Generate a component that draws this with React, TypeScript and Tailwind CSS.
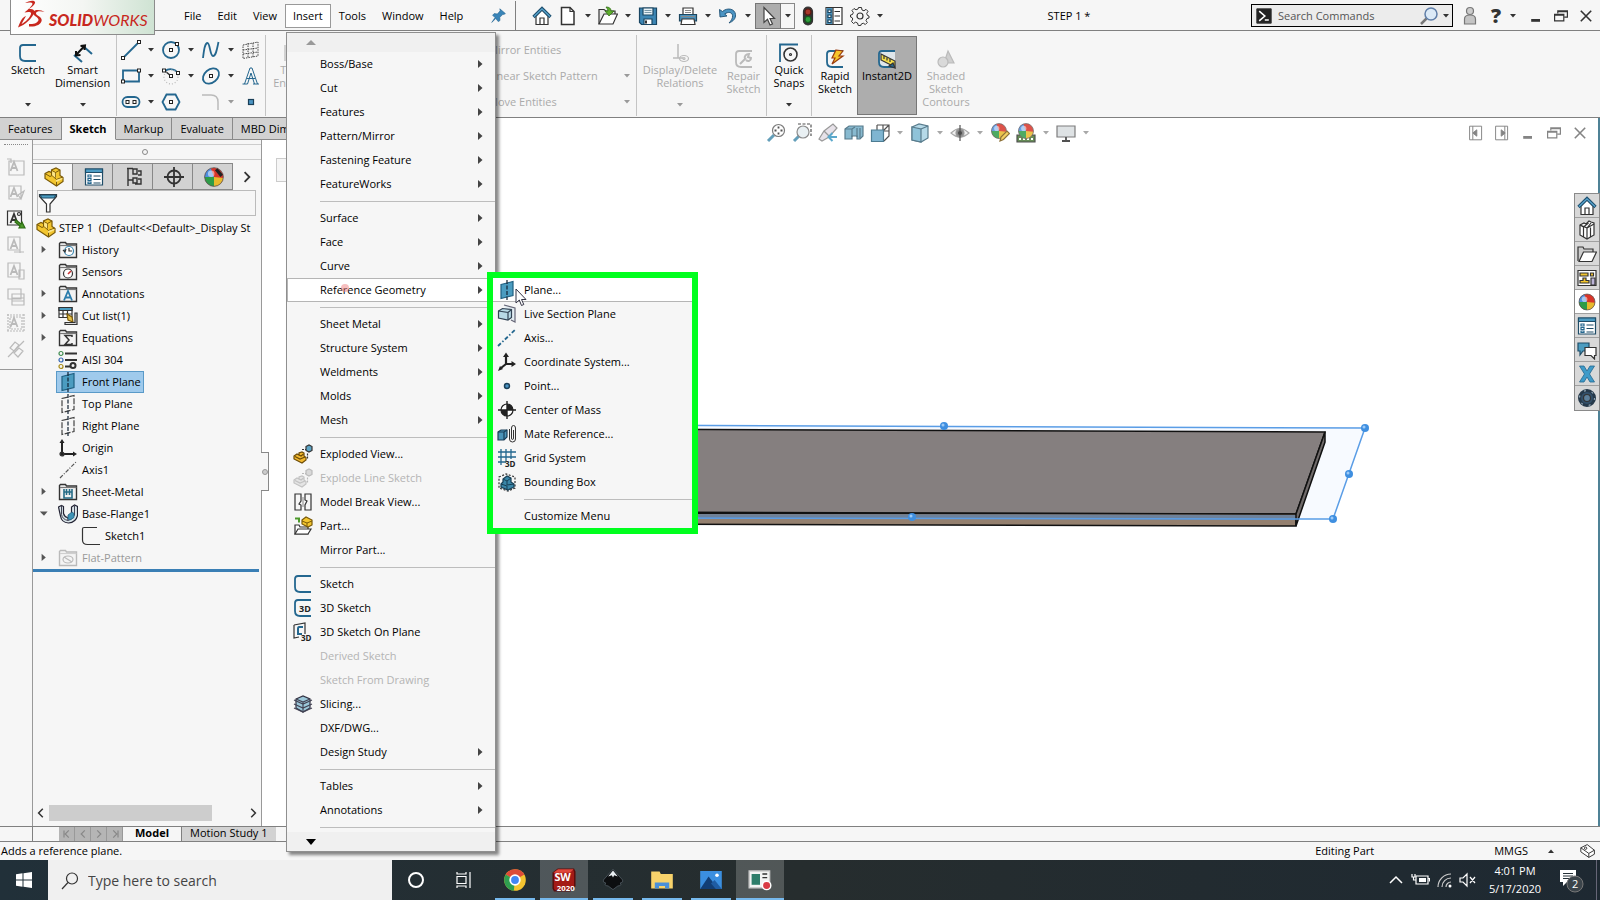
import { useState, type ReactNode } from "react";
import clsx from "clsx";

type IconProps = { children: ReactNode; size?: string; dim?: boolean };

// All icons are drawn on a 20x20 grid
function Icon({ children, size = "size-5", dim }: IconProps) {
  return (
    <svg viewBox="0 0 20 20" className={clsx(size, "shrink-0", dim && "opacity-30 grayscale")} fill="none" stroke="#333" strokeWidth={1.2} aria-hidden="true">
      {children}
    </svg>
  );
}

function Caret({ dim, up }: { dim?: boolean; up?: boolean }) {
  return (
    <svg viewBox="0 0 6 4" className={clsx("h-1 w-1.5 shrink-0", up && "rotate-180")} aria-hidden="true">
      <path d="M0 0h6L3 3.6z" fill={dim ? "#9a9a9a" : "#333"} />
    </svg>
  );
}

const Ball = ({ x = 10, y = 10, r = 7.5 }: { x?: number; y?: number; r?: number }) => (
  <g stroke="none">
    <circle cx={x} cy={y} r={r} fill="#d8352a" />
    <path d={`M${x} ${y}L${x - r * 0.35} ${y - r * 0.94}A${r} ${r} 0 0 0 ${x - r} ${y + r * 0.1}z`} fill="#4f8fe0" />
    <path d={`M${x} ${y}L${x - r} ${y}A${r} ${r} 0 0 0 ${x} ${y + r}z`} fill="#2e9c48" />
    <path d={`M${x} ${y}V${y + r}A${r} ${r} 0 0 0 ${x + r} ${y + r * 0.1}z`} fill="#e8b92c" />
    <circle cx={x - r * 0.3} cy={y - r * 0.35} r={r * 0.35} fill="#fff" opacity={0.5} />
    <circle cx={x} cy={y} r={r} stroke="#555" strokeWidth={0.7} fill="none" />
  </g>
);

const Folder = ({ children, dim }: { children?: ReactNode; dim?: boolean }) => (
  <Icon dim={dim}>
    <path d="M1.500 17.500v-14l1-1h5l1 1.500h10v13.500z" fill="#f2f2f2" strokeWidth={1.4} />
    <path d="M2 5.500h16.500" stroke="#777" />
    {children}
  </Icon>
);

const PartBody = ({ dim }: { dim?: boolean }) => (
  <Icon dim={dim}>
    <path d="M1 6.500l4-2 2.500 1V3L12 1l4 2v5.500l3 2v4L12.500 19 1 11.500z" fill="#f3c62f" stroke="#7a5a08" />
    <path d="M1 6.500l5 3 2-1 4.500 4V19M12.500 12.500L19 10M7.500 5.500v3M8 3.500l3.500 2L16 3M11.500 5.500v5" stroke="#7a5a08" strokeWidth={1} />
    <path d="M8.200 4.200l3 1.700v4.500l-3-2.200zM12 13l6.500-2.300-.2 1.500L12 15z" fill="#fbe58c" stroke="none" />
  </Icon>
);

const SketchMark = () => <path d="M18 2H5Q2 2 2 5v8q0 5 5 5h11" stroke="#24678f" strokeWidth={1.8} />;

const Plane = ({ fill = "none", stroke = "#444" }: { fill?: string; stroke?: string }) => (
  <Icon>
    <path d="M4 4.500l12-3v14l-12 3z" fill={fill} stroke={stroke} strokeDasharray={fill === "none" ? "6 1.500" : undefined} />
    <path d="M10 0v20" stroke="#123" strokeDasharray="4 1.500" />
  </Icon>
);

const House = () => (
  <Icon>
    <path d="M4 10v8.500h12V10L10 4z" fill="#fff" />
    <path d="M8 18v-6h4v6" />
    <path d="M1.500 11L10 2.500l8.500 8.500" stroke="#1d4f70" strokeWidth={3.2} />
    <path d="M2 10.500L10 2.800l8 7.700" stroke="#5aa7cf" strokeWidth={1.2} />
  </Icon>
);

const Sheet = () => (
  <Icon>
    <path d="M1.500 2h17v16h-17z" fill="#fff" stroke="#1f4d68" />
    <path d="M1.500 2h17v3.500h-17z" fill="#4c9cc4" stroke="#1f4d68" />
    <path d="M4 8h3v2H4zM4 11.500h3v2H4zM4 15h3v1.500H4z" stroke="#24678f" />
    <path d="M9.500 9h7M9.500 12.500h7M9.500 16h7" stroke="#1f4d68" />
  </Icon>
);

const Restore = () => (
  <Icon>
    <path d="M6 7V3.500h12v8h-4M6.500 4.500H18" strokeWidth={1.5} />
    <path d="M2 8h11.500v8H2zM2 9h11" strokeWidth={1.5} />
  </Icon>
);
const Close = () => <Icon><path d="M3.500 3.500l13 13M16.500 3.500l-13 13" strokeWidth={2} /></Icon>;
const Minimize = () => <Icon><path d="M4 15.500h11" strokeWidth={3.5} /></Icon>;

const Axis = () => <Icon><path d="M1 18L19 1" stroke="#24678f" strokeDasharray="4 2 1.500 2" strokeWidth={1.8} /></Icon>;

const Exploded = ({ dim }: { dim?: boolean }) => (
  <Icon dim={dim}>
    <path d="M1 12l3-2 2 1V9l3-1 2 1v3l2 1.500V16l-4 3-8-4z" fill="#f3b92f" stroke="#6d4c06" />
    <path d="M2 12.500l5 2.500 5-2M6 11l2 1 2.500-2" stroke="#6d4c06" />
    <path d="M13 2.500l3-1.500 3 1.500v4L16 8l-3-1.500z" fill="#5ea5c6" />
    <path d="M9 5.500h4M14.500 14.500v-6" strokeDasharray="2 1" />
  </Icon>
);

/* ---------- title bar ---------- */

const quickTools: { name: string; caret?: boolean; icon: ReactNode }[] = [
  { name: "Home", icon: <House /> },
  { name: "New", caret: true, icon: <Icon><path d="M3.500 1.500h8.500l4 4v13H3.500z" fill="#fff" strokeWidth={1.5} /><path d="M12 1.500v4h4" /></Icon> },
  {
    name: "Open",
    caret: true,
    icon: (
      <Icon>
        <path d="M1 18V3.500h5L8 5h9v3" fill="#e8e8e8" />
        <path d="M1 18L6 8h13.500L15 18z" fill="#fff" />
        <path d="M8 1c3 0 5 1 5 4h3l-5 5-4-5h3c0-1-.5-2-2-4z" fill="#5fae2e" stroke="#34701a" strokeWidth={0.8} />
      </Icon>
    ),
  },
  {
    name: "Save",
    caret: true,
    icon: (
      <Icon>
        <path d="M1.500 2h17v16.500h-15l-2-2z" fill="#3d86b4" stroke="#1a4663" />
        <path d="M5 2h10v7H5z" fill="#e9f2f7" stroke="#1a4663" />
        <path d="M6.500 4.500h7M6.500 6.500h7" stroke="#7a98a8" />
        <path d="M6 13h8v5.500H6z" fill="#fff" stroke="#1a4663" />
        <path d="M8 14.500v3" strokeWidth={2} />
      </Icon>
    ),
  },
  {
    name: "Print",
    caret: true,
    icon: (
      <Icon>
        <path d="M5 9V2h10v7" fill="#fff" />
        <path d="M1.500 8.500h17V15h-17z" fill="#4c93bd" stroke="#1d465f" />
        <path d="M4 13h12l1 5.500H3z" fill="#fff" />
        <path d="M7 4.500h6M7 6.500h6M3 10.500h14" stroke="#888" />
      </Icon>
    ),
  },
  {
    name: "Undo",
    caret: true,
    icon: <Icon><path d="M1.500 3.500l.5 7.500 7-1-2.300-2C10 5.500 14 6 14.500 9.500c.3 2.500-1 5-3.500 7.500 4-1.500 7-4.500 6.500-8.500C17 3 9.500 1 4.500 5.500z" fill="#4b94c3" stroke="#1d4f73" strokeWidth={0.9} /></Icon>,
  },
];

function QuickAccess() {
  return (
    <div className="ml-[13px] flex items-center">
      {quickTools.map((t) => (
        <div key={t.name} className="flex items-center">
          <button aria-label={t.name} className="flex w-[26px] justify-center">{t.icon}</button>
          {t.caret && <button aria-label={`${t.name} options`} className="flex h-5 w-3.5 items-center justify-center"><Caret /></button>}
        </div>
      ))}
      <button aria-label="Select" className="flex h-[26px] w-[26px] items-center justify-center border border-[#777] bg-[#adadad]">
        <Icon><path d="M6 1.500v15l3.500-3.200L12 19l2.500-1-2.500-5.500h4.500z" fill="#fff" stroke="#444" /></Icon>
      </button>
      <button aria-label="Select options" className="flex h-[26px] w-3.5 items-center justify-center border border-l-0 border-[#888]"><Caret /></button>
      <button aria-label="Rebuild" className="flex w-[26px] justify-center">
        <Icon>
          <rect x="5.500" y="1" width="9" height="18" rx="4.500" fill="#333" />
          <circle cx="10" cy="6" r="3" fill="#a8382c" stroke="#5e1b12" />
          <circle cx="10" cy="13.500" r="3" fill="#2f9e3c" stroke="#155a1e" />
        </Icon>
      </button>
      <button aria-label="File properties" className="flex w-[26px] justify-center">
        <Icon>
          <path d="M2 1.500h16v17H2z" fill="#fff" />
          <path d="M2.500 2h6v16h-6z" fill="#4c93bd" stroke="none" />
          <path d="M4 4h3v2.500H4zM4 9h3v2.500H4zM4 14h3v2.500H4z" fill="#fff" stroke="#1d465f" />
          <path d="M10.500 5.500h5.500M10.500 10h5.500M10.500 15h5.500M9 2v16" />
        </Icon>
      </button>
      <button aria-label="Options" className="flex w-[26px] justify-center">
        <Icon>
          <path d="M8.500 1.500h3l.5 2.500 2 .8 2-1.500 2 2-1.300 2.200.8 2 1.500.5v2l-2 .5-1 2 1.300 2-2 2-2-1.300-2 .8-.5 1.500h-2.500L7.500 17l-2-.8-2 1.300-2-2L2.800 13 2 11.500.5 11V9l2-.5.8-2L2 4.500l2-2 2 1.300 2-.8z" strokeWidth={1} />
          <circle cx="10" cy="10" r="3" />
        </Icon>
      </button>
      <button aria-label="Options list" className="flex h-5 w-3.5 items-center justify-center"><Caret /></button>
    </div>
  );
}

function Logo() {
  return (
    <div className="absolute left-[10px] top-0 flex h-[35px] w-[145px] items-start gap-1 border border-t-0 border-[#8c8c8c] bg-linear-to-r from-white via-[#f4f6f3] to-[#cfe3d3] pl-1.5 text-[#c8281e]">
      <svg viewBox="0 0 28 28" className="size-7 shrink-0" fill="#c8281e" aria-hidden="true">
        <path d="M8 3C11 1 17-.5 18 2c.6 2-3 5-6 7 4-.6 6 1 5 4-1.600 5-9 12-16 14.500 1-3 2.500-6.500 4-8.500 1-1.300 2.500-2.300 4-3l-4.500 8c4-2 8.500-6.500 9.500-10 .5-2.500-3-2.300-6.500-1.500C11 9.500 15 6 15.500 4 15.500 2 11 2.500 8 3z" />
        <path d="M27.500 12c-3-2.500-10-3-11.500 0-1.500 3.500 6 5 5.500 8-.4 2.500-4.500 4.500-9.500 4v2.500c7 .5 12-2 12.700-6 .6-4-6.200-5-5.700-7.500.5-2 5-2 8.500-1z" />
      </svg>
      <span className="whitespace-nowrap pt-3 font-[Lato] text-base leading-4 italic">
        <b className="font-black">SOLID</b>WORKS
      </span>
    </div>
  );
}

function TitleBar() {
  return (
    <header className="relative flex h-[31px] shrink-0 items-center border-b border-[#808080] bg-[#f6f6f6] pt-px">
      <Logo />
      <nav className="ml-44 flex h-full w-[340px] shrink-0 items-center border-r border-[#808080]">
        {["File", "Edit", "View", "Insert", "Tools", "Window", "Help"].map((m) => (
          <button key={m} className={clsx("h-6 border px-[7px]", m === "Insert" ? "border-[#999] bg-white" : "border-transparent")}>{m}</button>
        ))}
        <button aria-label="Pin menu" className="mr-2 ml-auto">
          <Icon size="size-4"><path d="M11 1l7 6-2 1-1-.3-4 4 .2 4L9 17l-3-4-5 5 4-6-3-3 2-2 4 .5 3.500-4z" fill="#3a85b8" stroke="#2a6a96" strokeWidth={0.8} /></Icon>
        </button>
      </nav>
      <QuickAccess />
      <h1 className="flex-1 text-center">STEP 1 *</h1>
      <form className="flex h-[23px] w-[202px] items-center border border-black bg-[#ececec] pl-1">
        <Icon size="size-4"><path d="M1 1h18v18H1z" fill="#222" /><path d="M4 4l7 6-7 6M11 15h5" stroke="#fff" strokeWidth={2} /></Icon>
        <input aria-label="Search Commands" placeholder="Search Commands" className="ml-1.5 w-0 flex-1 outline-none placeholder:text-[#555]" />
        <button aria-label="Search" type="button" className="ml-1">
          <Icon><path d="M7.500 12.500L2 18" stroke="#777" strokeWidth={2.5} /><circle cx="12" cy="8" r="6" fill="#dceaf7" stroke="#5f7ea8" strokeWidth={1.5} /></Icon>
        </button>
        <button aria-label="Search scope" type="button" className="pr-[3px] pl-1"><Caret /></button>
      </form>
      <button aria-label="Log in" className="ml-[7px]">
        <Icon><circle cx="10" cy="5" r="3.500" fill="#ccc" stroke="#777" /><path d="M4.500 18v-5q0-4 5.500-4t5.500 4v5z" fill="#c4c4c4" stroke="#777" /></Icon>
      </button>
      <button aria-label="Help topics" className="ml-2 w-4 text-xl leading-5 font-extrabold text-[#333]">?</button>
      <button aria-label="Help list" className="ml-1.5"><Caret /></button>
      <div className="mr-1.5 ml-3 flex items-center gap-[9px] [&_svg]:size-4">
        <button aria-label="Minimize"><Minimize /></button>
        <button aria-label="Restore"><Restore /></button>
        <button aria-label="Close"><Close /></button>
      </div>
    </header>
  );
}

/* ---------- ribbon ---------- */

const node = (x: number, y: number) => <rect x={x - 1.5} y={y - 1.5} width="3" height="3" fill="#fff" stroke="#222" strokeWidth={1} />;

const sketchTools: { name: string; caret?: boolean; dim?: boolean; icon: ReactNode }[] = [
  { name: "Line", caret: true, icon: <Icon><path d="M2 18L18 2" stroke="#24678f" strokeWidth={1.8} />{node(2, 18)}{node(18, 2)}</Icon> },
  { name: "Circle", caret: true, icon: <Icon><circle cx="10" cy="10" r="8" stroke="#24678f" strokeWidth={1.8} />{node(10, 10)}{node(16, 4)}</Icon> },
  { name: "Spline", caret: true, icon: <Icon><path d="M2 18C3 9 4 3 6.500 3S9 16 12 16s4-7 5.500-14" stroke="#24678f" strokeWidth={1.8} /></Icon> },
  { name: "Sketch plane", icon: <Icon><path d="M2 5l15-3v14L2 18.500zM7 3v15M12 3v14M2 10l15-2M2 14l15-2" strokeDasharray="1.500 1" strokeWidth={0.9} /></Icon> },
  { name: "Rectangle", caret: true, icon: <Icon><path d="M2 4.500h16v11H2z" stroke="#24678f" strokeWidth={1.8} />{node(2, 15.5)}{node(18, 4.5)}</Icon> },
  { name: "Arc", caret: true, icon: <Icon><path d="M4 5c5-4 12-1 13 3" stroke="#24678f" strokeWidth={1.8} /><path d="M4 5l6 5" strokeWidth={1.6} /><circle cx="10" cy="11" r="7" strokeDasharray="1 2" stroke="#bbb" />{node(3, 4.5)}{node(10, 10)}{node(17, 7)}</Icon> },
  { name: "Ellipse", caret: true, icon: <Icon><ellipse cx="10" cy="10" rx="9" ry="6.500" transform="rotate(-40 10 10)" stroke="#24678f" strokeWidth={1.8} />{node(10, 10)}</Icon> },
  { name: "Text", icon: <Icon><path d="M1.500 18h5M3.500 18L9 2h2l5.500 16M12 18h6M6 12.500h8M6.500 18L10 7l3.500 11" stroke="#24678f" strokeWidth={1} /></Icon> },
  { name: "Slot", caret: true, icon: <Icon><rect x="1.500" y="5" width="17" height="10" rx="5" stroke="#24678f" strokeWidth={1.8} />{node(6.5, 10)}{node(13.5, 10)}</Icon> },
  { name: "Polygon", icon: <Icon><path d="M5.500 2.500h9l4 7.500-4 7.500h-9L1.500 10z" stroke="#24678f" strokeWidth={1.8} />{node(10, 10)}</Icon> },
  { name: "Fillet", caret: true, dim: true, icon: <Icon dim><path d="M1 3h9q7 0 7 7v8" strokeWidth={1.5} /></Icon> },
  { name: "Point", icon: <Icon><rect x="7.500" y="7.500" width="5" height="5" fill="#4b94c3" stroke="#1a3f58" /></Icon> },
];

type BigButtonProps = { label: string; icon: ReactNode; width: string; dim?: boolean; caret?: boolean; low?: boolean; active?: boolean };

function BigButton({ label, icon, width, dim, caret, low, active }: BigButtonProps) {
  return (
    <button
      disabled={dim}
      className={clsx(
        "flex shrink-0 flex-col items-center leading-[13px] whitespace-pre-line",
        width,
        low ? "pt-3" : "pt-1.5",
        dim && "text-[#aaa]",
        active ? "my-px border border-[#777] bg-[#adadad]" : "my-0.5"
      )}
    >
      {icon}
      <span>{label}</span>
      {caret && <span className="mt-auto pb-[7px]"><Caret dim={dim} /></span>}
    </button>
  );
}

const Rule = () => <div className="mx-px w-px shrink-0 bg-[#c4c4c4]" />;

function Ribbon() {
  return (
    <section className="flex h-[87px] shrink-0 overflow-hidden border-b border-[#808080] bg-[#f6f6f6] pt-1 pb-px">
      <BigButton width="w-14" caret label="Sketch" icon={<Icon><SketchMark /></Icon>} />
      <BigButton
        width="mr-1.5 w-[53px]"
        caret
        label={"Smart\nDimension"}
        icon={<Icon><path d="M1 12l8 7M10 3l9 8" stroke="#24678f" strokeWidth={2} /><path d="M3 12l8.500-9M3 8l0 4.500 4.500-.5M7.500 3l4.500-.5-.5 4.500" strokeWidth={2} stroke="#111" /></Icon>}
      />
      <Rule />
      <div className="mt-0.5 grid shrink-0 grid-cols-[40px_40px_40px_26px] grid-rows-[26px_26px_26px]">
        {sketchTools.map((t) => (
          <div key={t.name} className="flex items-center">
            <button aria-label={t.name} className="flex w-[26px] justify-center">{t.icon}</button>
            {t.caret && <button aria-label={`${t.name} list`} className="flex h-5 w-3.5 items-center justify-center"><Caret dim={t.dim} /></button>}
          </div>
        ))}
      </div>
      <Rule />
      <BigButton width="w-[50px]" dim caret label={"Trim\nEntities"} icon={<Icon dim><path d="M3 2v16M8 4l8 12M16 4L8 16" /></Icon>} />
      <div className="mt-0.5 grid w-[318px] shrink-0 grid-rows-[26px_26px_26px] pl-[171px] text-[#aaa]">
        {["Mirror Entities", "Linear Sketch Pattern", "Move Entities"].map((t, i) => (
          <button key={t} disabled className="flex items-center justify-between pr-[5px] text-left whitespace-nowrap">
            {t}
            {i > 0 && <Caret dim />}
          </button>
        ))}
      </div>
      <Rule />
      <BigButton width="w-[84px]" dim caret label={"Display/Delete\nRelations"} icon={<Icon dim><path d="M8 1v14M3 15h10" strokeWidth={1.5} /><ellipse cx="14" cy="15.500" rx="4.500" ry="3" /><circle cx="14" cy="15.500" r="1" /></Icon>} />
      <BigButton width="w-[43px]" dim low label={"Repair\nSketch"} icon={<Icon dim><path d="M18 2H5Q2 2 2 5v8q0 5 5 5h11" strokeWidth={1.8} /><path d="M6 15l6-6M11 10c-1-3 1-5 4-5l-1 3 3 1c0 3-3 4-5 2" strokeWidth={2} /></Icon>} />
      <Rule />
      <BigButton width="w-[42px]" caret label={"Quick\nSnaps"} icon={<Icon><path d="M1 19V1.500h18" stroke="#24678f" strokeWidth={1.8} /><circle cx="11.500" cy="11.500" r="6.500" strokeWidth={1.6} /><circle cx="11.500" cy="11.500" r="1" /></Icon>} />
      <Rule />
      <BigButton width="w-11" low label={"Rapid\nSketch"} icon={<Icon><SketchMark /><path d="M11 1l7 1-4 5h4L7 15l3-6H7z" fill="#f6c52b" stroke="#9a3c10" /></Icon>} />
      <BigButton width="w-[60px]" low active label="Instant2D" icon={<Icon><path d="M18 2H5Q2 2 2 5v8q0 5 5 5h11" fill="#dfe6ea" stroke="#24678f" strokeWidth={1.8} /><path d="M4 5l14 7v6L4 11z" fill="#f4de4c" /><path d="M7 7v3M10 8.500v3M13 10v3M12 17l6 2-2-5z" fill="#24678f" /></Icon>} />
      <BigButton width="w-[58px]" dim low label={"Shaded\nSketch\nContours"} icon={<Icon dim><path d="M12 2l6 12H8z" fill="#777" /><circle cx="7" cy="13" r="5" fill="#999" /></Icon>} />
    </section>
  );
}

/* ---------- left side ---------- */

const railIcons: ReactNode[] = [
  <path key="a" d="M3 4h15v14H3zM1 2h4v4" />,
  <path key="b" d="M3 3h12v13H3zM12 12l6-4-3 8z" />,
  <path key="c" d="M1.500 2h14v14h-14z" />,
  <path key="d" d="M2 2h12v13H2zM8 17h10M14 10v8" />,
  <path key="e" d="M2 2h12v14H2zM13 9h5v9h-5z" />,
  <path key="f" d="M2 2h13v10H2zM6 7h12v11H6zM6 11h12M6 14h12" />,
  <path key="g" d="M4 4h12v12H4zM2 1v18M18 1v18M1 2h18M1 18h18" strokeDasharray="2 1" />,
  <path key="h" d="M4 9l5-6 4 3-5 6zM8 14l5-5 4 3-5 6zM2 18L18 2" />,
];

function ToolRail() {
  return (
    <aside className="w-8 shrink-0 bg-[#f6f6f6]">
      <div className="mx-1 mt-1 border-t border-dotted border-[#888]" />
      <div className="flex flex-col items-center gap-1.5 border-b border-[#999] pt-3 pb-2.5">
        {railIcons.map((p, i) => (
          <button key={i} aria-label={`Annotation tool ${i + 1}`}>
            <Icon dim={i !== 2}>
              {p}
              {i !== 5 && i !== 7 && <path d="M4.500 14L8 5l3.500 9M6 11h4" strokeWidth={1.8} />}
              {i === 2 && <><circle cx="13" cy="5" r="1.500" /><path d="M10 11l5 4 1-2 3 6h-6l1-2-5-4z" fill="#4c9a2a" stroke="#2d6a14" /></>}
            </Icon>
          </button>
        ))}
      </div>
    </aside>
  );
}

type TreeNode = { name: string; icon: ReactNode; open?: boolean; closed?: boolean; selected?: boolean; child?: boolean; dim?: boolean };

const treeNodes: TreeNode[] = [
  { name: "History", closed: true, icon: <Folder><circle cx="11" cy="11" r="4.500" stroke="#3a87b0" fill="#fff" /><path d="M11 8v3h3M5 10l2 2 1-3" /></Folder> },
  { name: "Sensors", icon: <Folder><circle cx="10" cy="11.500" r="4.500" fill="#fff" /><path d="M10 12l3-3" stroke="#c33" strokeWidth={1.6} /></Folder> },
  { name: "Annotations", closed: true, icon: <Folder><path d="M6 16.500L10 7l4 9.500M7.500 13.500h5" stroke="#2b7cab" strokeWidth={1.8} /></Folder> },
  {
    name: "Cut list(1)",
    closed: true,
    icon: (
      <Icon>
        <path d="M1 1.500h13v10H1z" fill="#fff" />
        <path d="M1 1.500h13v3H1z" fill="#4b9cc0" />
        <path d="M1 8h13M5 4v8M9.500 4v8" />
        <path d="M9 8l5 3 1 5-5-2z" fill="#e5c048" stroke="#7a5a08" />
        <path d="M19 7v11.500H7v-2h10V7z" fill="#ddd" />
      </Icon>
    ),
  },
  { name: "Equations", closed: true, icon: <Folder><path d="M14 9V7.500H7l4 4.500-4 4.500h7V15" strokeWidth={1.5} /></Folder> },
  {
    name: "AISI 304",
    icon: (
      <Icon>
        <circle cx="3" cy="3.500" r="2" stroke="#3e8b4e" /><circle cx="3" cy="10" r="2" stroke="#3667b3" /><circle cx="3" cy="16.500" r="2" stroke="#a98c18" />
        <path d="M7 3.500h12M7 10h12M7 16.500h5" strokeWidth={1.8} /><circle cx="15" cy="15.500" r="2.500" strokeWidth={2} />
      </Icon>
    ),
  },
  { name: "Front Plane", selected: true, icon: <Plane fill="#4b9cc0" stroke="#1f5f80" /> },
  { name: "Top Plane", icon: <Plane /> },
  { name: "Right Plane", icon: <Plane /> },
  { name: "Origin", icon: <Icon><path d="M4 3v13h13" strokeWidth={2} stroke="#222" /><path d="M1.500 5L4 1l2.500 4zM15 13.500l4 2.500-4 2.500z" fill="#222" stroke="none" /><circle cx="4" cy="16" r="2" fill="#222" /></Icon> },
  { name: "Axis1", icon: <Icon><path d="M2 18L18 2" stroke="#555" strokeDasharray="4 1.500 1 1.500" /></Icon> },
  { name: "Sheet-Metal", closed: true, icon: <Folder><path d="M6 7v9h8V7M8.500 7v6M11.500 7v6M6 10h8" stroke="#256b86" strokeWidth={1.6} /></Folder> },
  {
    name: "Base-Flange1",
    open: true,
    icon: (
      <Icon>
        <path d="M0.500 3l3-1.500 2 1v7q1 3.500 4 4 4-.5 4-4V3l3-2 3 1.500v9q-1.500 7-9 7.500-7-.5-8-7z" fill="#dbe6ea" stroke="#223" />
        <path d="M3.500 1.500v9q1 5 6.500 6 5-1 6.500-5.500v-10M9.500 13.500l.5 3" stroke="#445" strokeWidth={1} />
        <path d="M10 11l4-3 2 1.500v4L12 16l-2-1z" fill="#3f93b6" stroke="#1f5f80" strokeWidth={0.8} />
      </Icon>
    ),
  },
  { name: "Sketch1", child: true, icon: <Icon><path d="M16 1.500H3Q1.500 1.500 1.500 3v11q0 4.500 5 4.500H19" /></Icon> },
  { name: "Flat-Pattern", closed: true, dim: true, icon: <Folder dim><ellipse cx="10" cy="11.500" rx="5" ry="3.500" /><path d="M6 9l8 5" /></Folder> },
];

const panelTabs: { name: string; icon: ReactNode }[] = [
  { name: "FeatureManager", icon: <PartBody /> },
  { name: "PropertyManager", icon: <Sheet /> },
  { name: "ConfigurationManager", icon: <Icon><path d="M4 1v18M3 1.500h6M4 13h5M9 2h4v5H9zM9 11h4v5H9zM14 4h3v4h-3M14 12h3v5h-6" strokeWidth={1.4} /></Icon> },
  { name: "DimXpertManager", icon: <Icon><circle cx="10" cy="10" r="6.500" strokeWidth={1.8} /><path d="M10 0v20M0 10h20" strokeWidth={1.8} /></Icon> },
  { name: "DisplayManager", icon: <Icon size="size-[22px]"><Ball r={8.5} /><path d="M12 3l5 6" stroke="#222" strokeWidth={3} /></Icon> },
];

function FeatureTree() {
  const [tab, setTab] = useState("FeatureManager");
  return (
    <aside className="relative flex w-[230px] shrink-0 flex-col border-x border-[#999] bg-[#f6f6f6]">
      <div className="mt-1 flex h-4 items-center justify-center border-y border-[#ccc] pr-1">
        <span className="size-1.5 rounded-full border border-[#888]" />
      </div>
      <div role="tablist" className="mt-[3px] flex h-[27px] shrink-0 items-stretch">
        {panelTabs.map((t) => (
          <button
            key={t.name}
            role="tab"
            aria-label={t.name}
            aria-selected={tab === t.name}
            onClick={() => setTab(t.name)}
            className={clsx("flex w-10 items-center justify-center border-t border-r border-[#888] pl-0.5", tab === t.name ? "bg-[#f6f6f6]" : "border-b bg-[#d2d2d2]")}
          >
            {t.icon}
          </button>
        ))}
        <button aria-label="More tabs" className="flex flex-1 items-center justify-center">
          <Icon size="size-3"><path d="M6 2l8 8-8 8" strokeWidth={3} /></Icon>
        </button>
      </div>
      <label className="mr-[5px] ml-1 flex h-[26px] shrink-0 items-center border border-[#bbb]">
        <Icon><path d="M1.500 1.500h17v2L12 11v8H8.500v-8L1.500 3.500z" fill="#fff" /><path d="M2 2h16l-2 3H4z" fill="#4b9cc0" stroke="#1f4d68" /></Icon>
        <input aria-label="Filter" className="w-0 flex-1 outline-none" />
      </label>
      <div className="mt-px flex h-[22px] shrink-0 items-center gap-[3px] pl-[3px] whitespace-pre">
        <PartBody />
        {"STEP 1  (Default<<Default>_Display St"}
      </div>
      <ul role="tree" className="mr-0.5 border-b-3 border-[#3a7fb5]">
        {treeNodes.map((n) => (
          <li key={n.name} role="treeitem" aria-selected={!!n.selected} className={clsx("flex h-[22px] items-center", n.dim && "text-[#999]")}>
            <span className={clsx("flex shrink-0 pl-[5px]", n.child ? "w-[46px]" : "w-[23px]")}>
              {n.closed && <Icon size="size-3"><path d="M6 3l7 6-7 6z" fill="#555" stroke="none" /></Icon>}
              {n.open && <Icon size="size-3"><path d="M3 6h13l-6 7z" fill="#555" stroke="none" /></Icon>}
            </span>
            <button className={clsx("flex h-[22px] items-center gap-1 border pr-0.5 pl-px", n.selected ? "border-[#5a9ac8] bg-[#9fcaec]" : "border-transparent")}>
              {n.icon}
              {n.name}
            </button>
          </li>
        ))}
      </ul>
      <div className="mt-auto mb-[5px] flex h-4 items-center px-0.5">
        <Icon size="size-3"><path d="M13 3l-7 7 7 7" strokeWidth={2.5} /></Icon>
        <div className="mx-0.5 h-full flex-1"><div className="h-full w-5/6 bg-[#cdcdcd]" /></div>
        <Icon size="size-3"><path d="M7 3l7 7-7 7" strokeWidth={2.5} /></Icon>
      </div>
      <button aria-label="Collapse panel" className="absolute top-[312px] -right-2 z-10 flex h-[39px] w-2 items-center justify-center border border-l-0 border-[#888] bg-[#f6f6f6]">
        <span className="size-1.5 rounded-full border border-[#999] bg-[#ccc]" />
      </button>
    </aside>
  );
}

/* ---------- graphics area ---------- */

const viewTools: { name: string; caret?: boolean; icon: ReactNode }[] = [
  { name: "Zoom to fit", icon: <Icon><path d="M8 12l-6 6" stroke="#4a8fae" strokeWidth={3} /><circle cx="12.500" cy="7.500" r="6" fill="#fff" stroke="#666" /><path d="M12.500 3.500v2M12.500 9.500v2M8.500 7.500h2M14.500 7.500h2" strokeWidth={1.8} /></Icon> },
  { name: "Zoom to area", icon: <Icon><path d="M8 12l-6 6" stroke="#4a8fae" strokeWidth={3} /><circle cx="11" cy="9" r="6" fill="#e6eef2" stroke="#777" /><path d="M6 1h13v12" strokeDasharray="3 1.500" /></Icon> },
  { name: "Previous view", icon: <Icon><path d="M1 16L6 8l9-7 4 4-8 9-7 4z" fill="#e3dde6" stroke="#888" /><path d="M6 8l5 5" stroke="#888" /><path d="M19 14h-8M14.500 10l-4 4 4 4" stroke="#3f9ac2" strokeWidth={2} /></Icon> },
  { name: "Section view", icon: <Icon><path d="M1 6l4-3h14v10l-3 3h-3v-3H8v3H1z" fill="#74aec8" stroke="#3c6579" /><path d="M1 6h7l3-2M8 6v8M13 5v9M16 5v10" stroke="#3c6579" /></Icon> },
  { name: "View orientation", caret: true, icon: <Icon><path d="M7 2h12v11l-5 5M13 2v6M7 2v5M19 2l-5 5M19 8h-5" /><path d="M1.500 7h12v11.500h-12z" fill="#69a9c9" stroke="#2f6680" /></Icon> },
  { name: "Display style", caret: true, icon: <Icon><path d="M2 4l7-3 9 2v12l-7 4-9-2z" fill="#a9d3e4" stroke="#3c6579" /><path d="M2 4l9 2v13l-9-2z" fill="#7cb9d3" stroke="#3c6579" /><path d="M11 6l7-3" stroke="#3c6579" /></Icon> },
  { name: "Hide/show items", caret: true, icon: <Icon><path d="M1 10q9-9 18 0-9 8-18 0z" fill="#eee" stroke="#999" /><circle cx="10" cy="10" r="4" fill="#777" stroke="#888" /><circle cx="10" cy="10" r="1.500" fill="#222" /><path d="M10 2v16" /></Icon> },
  { name: "Edit appearance", icon: <Icon><Ball x={9} y={8} r={7.5} /><path d="M10 18l1-4 6-6 2.500 2.500-6 6z" fill="#f1c84a" stroke="#7a5a18" /></Icon> },
  { name: "Apply scene", caret: true, icon: <Icon><path d="M1 12h18v7H1z" fill="#4d7a3a" stroke="#333" /><path d="M3 16h14" strokeDasharray="2 2" stroke="#fff" strokeWidth={2} /><Ball y={8} r={7.5} /></Icon> },
  { name: "View settings", caret: true, icon: <Icon><path d="M1 3h18v11H1z" fill="#d9dde0" stroke="#666" /><path d="M10 14v4M6 18h8" strokeWidth={1.8} /></Icon> },
];

const taskPane: { name: string; icon: ReactNode }[] = [
  { name: "Resources", icon: <House /> },
  { name: "Design Library", icon: <Icon><path d="M3 5l4-2 2 1 3-3 2 1 3 1v12l-7 4-7-4z" fill="#fff" /><path d="M3 5l3.500 2v10M6.500 7l5-4M3 5l7 3v11M10 8l4-5M13.500 7.500v9.500M10 8l7-4" /></Icon> },
  { name: "File Explorer", icon: <Icon><path d="M1 17V3h5l1 2h9v3" fill="#ccc" /><path d="M2 17.500L6.500 8h13L15 17.500z" fill="#fff" /></Icon> },
  { name: "View Palette", icon: <Icon><path d="M1 2.500h18v15H1z" fill="#fff" /><path d="M3 5h8v3H3zM13.500 5h3v3h-3zM3 15v-2.500h3V10h3v2.500h3V15z" fill="#f3c62f" /><path d="M14 10h4v7h-4z" fill="#bcb4d8" /></Icon> },
  { name: "Appearances", icon: <Icon><Ball r={8} /></Icon> },
  { name: "Custom Properties", icon: <Sheet /> },
  { name: "Forum", icon: <Icon><path d="M1 3h11v8H6l-3 4v-4H1z" fill="#4b9cc0" stroke="#1f4d68" /><path d="M8 7.500h11v8h-1.500v3.500l-3.500-3.500H8z" fill="#fff" /></Icon> },
  { name: "Exchange", icon: <Icon><path d="M2.500 2h4.500l3 5 3-5h4.500L12.500 10l5 8h-4.500l-3-5-3 5H2.500l5-8z" fill="#3f9bc9" stroke="#24678f" strokeWidth={0.8} /></Icon> },
  { name: "Composer", icon: <Icon><circle cx="10" cy="10" r="7.500" fill="#33506a" stroke="#26394a" strokeWidth={3} /><circle cx="10" cy="10" r="7.500" stroke="#8fa5b5" strokeWidth={1.2} strokeDasharray="2 6" /><circle cx="10" cy="10" r="3.500" fill="#5c7f9b" /></Icon> },
];

function Viewport() {
  const handles = [[944, 426], [1365, 428], [1349, 474], [1333, 519], [912, 517]];
  return (
    <main className="relative min-w-0 flex-1 border-r-2 border-[#4f8296] bg-white">
      <svg viewBox="262 118 1336 708" preserveAspectRatio="xMinYMin meet" className="absolute inset-0 size-full" role="img" aria-label="Sheet metal plate with front plane selected">
        <path d="M600 425L1365 428 1333 519H600z" fill="#f7faff" />
        <path d="M600 429L1325 432 1296 514 600 512z" fill="#857f7f" stroke="#111" strokeWidth="1.500" />
        <path d="M600 513L1296 514V526L600 524z" fill="#94806f" stroke="#111" strokeWidth="1.500" />
        <path d="M600 514L1296 515V520L600 518z" fill="#6d819a" />
        <path d="M1325 432V442L1296 526V514z" fill="#6f6a6a" stroke="#111" strokeWidth="1.500" />
        <path d="M600 425L1365 428 1333 519 600 518" fill="none" stroke="#5a9de6" strokeWidth="1.500" />
        {handles.map(([x, y]) => (
          <g key={x}>
            <circle cx={x} cy={y} r="4" fill="#3f8fe0" />
            <circle cx={x - 1} cy={y - 1} r="1.500" fill="#9ccaf7" />
          </g>
        ))}
      </svg>
      <div className="absolute top-10 left-3.5 h-6 w-24 border border-[#ccc] bg-[#f6f6f6]" />
      <div className="absolute inset-x-0 top-1 flex items-center justify-center pt-px pr-1">
        {viewTools.map((t) => (
          <div key={t.name} className="flex items-center opacity-85">
            <button aria-label={t.name} className="flex w-[26px] justify-center">{t.icon}</button>
            {t.caret && <button aria-label={`${t.name} list`} className="flex h-5 w-3.5 items-center justify-center"><Caret dim /></button>}
          </div>
        ))}
      </div>
      <div className="absolute top-[7px] right-2.5 flex items-center gap-2.5 opacity-60 [&_svg]:size-4">
        <button aria-label="Dock left"><Icon><path d="M2 1.500h15v17H2zM6 1.500v17" /><path d="M11 6v8l-5-4z" fill="#333" /></Icon></button>
        <button aria-label="Dock right"><Icon><path d="M2 1.500h15v17H2zM13.500 1.500v17" /><path d="M9 6v8l5-4z" fill="#333" /></Icon></button>
        <button aria-label="Minimize document"><Minimize /></button>
        <button aria-label="Restore document"><Restore /></button>
        <button aria-label="Close document"><Close /></button>
      </div>
      <div className="absolute top-[75px] -right-0.5 flex w-[26px] flex-col border border-[#8a8a8a]">
        {taskPane.map((t) => (
          <button key={t.name} aria-label={t.name} className={clsx("flex h-6 items-center justify-center border-b border-[#a0a0a0] last:border-b-0", t.name === "Appearances" ? "bg-white" : "bg-[#d8d8d8]")}>
            {t.icon}
          </button>
        ))}
      </div>
    </main>
  );
}

/* ---------- menus ---------- */

type MenuEntry = "-" | { label: string; sub?: boolean; dim?: boolean; icon?: ReactNode };

const insertMenu: MenuEntry[] = [
  { label: "Boss/Base", sub: true },
  { label: "Cut", sub: true },
  { label: "Features", sub: true },
  { label: "Pattern/Mirror", sub: true },
  { label: "Fastening Feature", sub: true },
  { label: "FeatureWorks", sub: true },
  "-",
  { label: "Surface", sub: true },
  { label: "Face", sub: true },
  { label: "Curve", sub: true },
  { label: "Reference Geometry", sub: true },
  "-",
  { label: "Sheet Metal", sub: true },
  { label: "Structure System", sub: true },
  { label: "Weldments", sub: true },
  { label: "Molds", sub: true },
  { label: "Mesh", sub: true },
  "-",
  { label: "Exploded View...", icon: <Exploded /> },
  { label: "Explode Line Sketch", dim: true, icon: <Exploded dim /> },
  { label: "Model Break View...", icon: <Icon><path d="M2 2h6v7l-2 3 2 1v5H2zM18 2h-6v6l2 1-2 4v5h6z" /><path d="M10 5v10" stroke="#999" /></Icon> },
  { label: "Part...", icon: <Icon><path d="M2 18V9h4l1 2h8v7z" fill="#fff" /><path d="M2 18l3-5h13l-3 5z" fill="#fff" /><path d="M9 4l4-3 6 3v5l-4 2-6-3z" fill="#f3c62f" stroke="#7a5a08" /><path d="M9 5l5 2 5-2M14 7v4" stroke="#7a5a08" strokeWidth={1} /><path d="M2 2.500h4v4" stroke="#4c9a2a" strokeWidth={2} /></Icon> },
  { label: "Mirror Part..." },
  "-",
  { label: "Sketch", icon: <Icon><SketchMark /></Icon> },
  { label: "3D Sketch", icon: <Icon><SketchMark /><text x="6" y="14" fontSize="9" fontWeight="bold" fill="#222" stroke="none">3D</text></Icon> },
  { label: "3D Sketch On Plane", icon: <Icon><path d="M1 3l11-2v11M1 3v13l5-1" /><path d="M10 5H6Q5 5 5 7v5h4" stroke="#24678f" strokeWidth={2} /><text x="8" y="19" fontSize="8" fontWeight="bold" fill="#222" stroke="none">3D</text></Icon> },
  { label: "Derived Sketch", dim: true },
  { label: "Sketch From Drawing", dim: true },
  { label: "Slicing...", icon: <Icon><path d="M3 5l7-3 7 3v9l-7 4-7-4z" fill="#9cc8da" stroke="#334" /><path d="M1 6l9 4 9-4M1 10l9 4 9-4M1 14l9 4 9-4M3 5l7 3 7-3M10 8v10" stroke="#445" /></Icon> },
  { label: "DXF/DWG..." },
  { label: "Design Study", sub: true },
  "-",
  { label: "Tables", sub: true },
  { label: "Annotations", sub: true },
  "-",
];

const geometryMenu: MenuEntry[] = [
  { label: "Plane...", icon: <Plane fill="#4b9cc0" stroke="#1f5f80" /> },
  { label: "Live Section Plane", icon: <Icon><path d="M7 1l11 3v14l-4-2" fill="#e4eef3" stroke="#667" /><path d="M1.500 7l4-2.500 9 1v8L11 16l-9.500-2z" fill="#b8d9e6" stroke="#345" /><path d="M1.500 7L11 8.500V16M11 8.500l3.500-3" stroke="#345" /></Icon> },
  { label: "Axis...", icon: <Axis /> },
  { label: "Coordinate System...", icon: <Icon><path d="M9 4v8h7M9 12l-5 4" stroke="#222" strokeWidth={2.2} /><path d="M6 5l3-4.500L12 5zM14.500 9l4.500 3-4.500 3zM6 17l-5 2 2-5z" fill="#222" stroke="none" /></Icon> },
  { label: "Point...", icon: <Icon><circle cx="10" cy="10" r="2.500" fill="#4b94c3" stroke="#1a3f58" strokeWidth={1.5} /></Icon> },
  { label: "Center of Mass", icon: <Icon><circle cx="10" cy="10" r="6" fill="#fff" stroke="#222" /><path d="M10 10V4a6 6 0 0 1 6 6zM10 10v6a6 6 0 0 1-6-6z" fill="#222" stroke="none" /><path d="M10 1v18M1 10h18" stroke="#222" strokeWidth={1.4} /></Icon> },
  { label: "Mate Reference...", icon: <Icon><path d="M1 8l3-2h6v7l-3 3H1z" fill="#4b94b8" stroke="#1a3f58" /><path d="M1 8h6v8M7 8l3-2" stroke="#1a3f58" /><path d="M12.500 5v10q0 3 3 3t3-3V4q0-2.500-2-2.500T14.500 4v10q0 1.500 1 1.500t1-1.500V6" strokeWidth={1} /></Icon> },
  { label: "Grid System", icon: <Icon><path d="M4 1v16M9 1v12M14 1v10M1 4h18M1 9h18M1 14h8" stroke="#24678f" strokeWidth={1.3} /><text x="8" y="19" fontSize="8" fontWeight="bold" fill="#222" stroke="none">3D</text></Icon> },
  { label: "Bounding Box", icon: <Icon><path d="M2 5l7-3 9 3v11l-7 3-9-3z" strokeDasharray="2 1.500" /><path d="M4 12l2-2V7l4-3 4 2v4l3 2v3l-6 3-7-3z" fill="#3a86a8" stroke="#173f55" /><path d="M6 7l4 2 4-3M10 9v4l7-1M4 12l6 2v4" stroke="#173f55" strokeWidth={1} /></Icon> },
  "-",
  { label: "Customize Menu" },
];

type MenuRowProps = { entry: MenuEntry; hot?: boolean; nested?: boolean; children?: ReactNode };

function MenuRow({ entry, hot, nested, children }: MenuRowProps) {
  if (entry === "-") {
    return <li role="separator" className={clsx("flex h-2.5 items-center", nested ? "pl-[31px]" : "pl-[33px]")}><span className="h-px flex-1 bg-[#bdbdbd]" /></li>;
  }
  return (
    <li role="none" className="relative">
      <button
        role="menuitem"
        disabled={entry.dim}
        className={clsx(
          "flex h-6 w-full items-center pr-3 text-left whitespace-nowrap",
          entry.dim && "text-[#b4b4b4]",
          hot && (nested ? "border-b border-[#b5b5b5] bg-white" : "bg-white outline-1 -outline-offset-1 outline-[#b5b5b5]")
        )}
      >
        <span className={clsx("flex shrink-0 justify-center", nested ? "w-[31px] pr-1" : "w-[33px] pr-px")}>{entry.icon}</span>
        <span className="flex-1">{entry.label}</span>
        {entry.sub && <svg viewBox="0 0 5 8" className="h-2 w-[5px]" aria-hidden="true"><path d="M0 0l4.500 4L0 8z" fill="#444" /></svg>}
      </button>
      {children}
    </li>
  );
}

function InsertMenu() {
  return (
    <div className="absolute top-8 left-[286px] z-20 w-[210px] border border-[#8f8f8f] bg-[#f6f6f6] shadow-[3px_3px_3px_#0007]">
      <button aria-label="Scroll up" className="flex h-[19px] w-full items-center bg-[#f0f0f0] pl-[19px]"><svg viewBox="0 0 10 5" className="h-[5px] w-2.5"><path d="M0 5h10L5 0z" fill="#999" /></svg></button>
      <ul role="menu">
        {insertMenu.map((e, i) => {
          const hot = e !== "-" && e.label === "Reference Geometry";
          return (
            <MenuRow key={i} entry={e} hot={hot}>
              {hot && (
                <>
                  <span className="absolute top-1.5 left-[54px] size-2 rounded-full bg-[#f08080]/50" />
                  <ul role="menu" className="absolute -top-1.5 left-[200px] w-[211px] border-[6px] border-[#00ff1e] bg-[#f6f6f6]">
                    {geometryMenu.map((g, j) => (
                      <MenuRow key={j} entry={g} hot={j === 0} nested />
                    ))}
                    <svg viewBox="0 0 12 19" className="absolute top-2.5 left-[22px] h-[19px] w-3" aria-hidden="true">
                      <path d="M1 1v14l3.300-3L6.500 17.500l2.300-1-2.300-5H11z" fill="#fff" stroke="#334" />
                    </svg>
                  </ul>
                </>
              )}
            </MenuRow>
          );
        })}
      </ul>
      <button aria-label="Scroll down" className="flex h-[19px] w-full items-center bg-[#f0f0f0] pl-[19px]"><svg viewBox="0 0 10 6" className="h-1.5 w-2.5"><path d="M0 0h10L5 6z" fill="#000" /></svg></button>
    </div>
  );
}

/* ---------- bottom ---------- */

function BottomTabs() {
  return (
    <div className="flex h-4 shrink-0 border-y border-[#808080] bg-[#f6f6f6] leading-3">
      <div className="ml-8 w-[27px] border-l border-[#808080]" />
      {["M13 4l-6 6 6 6M5 4v12", "M13 4l-6 6 6 6", "M7 4l6 6-6 6", "M7 4l6 6-6 6M15 4v12"].map((d) => (
        <button key={d} aria-label="Scroll tabs" className="flex w-4 items-center justify-center border-r border-[#999] bg-[#b5b5b5]"><Icon size="size-3"><path d={d} stroke="#888" strokeWidth={2} /></Icon></button>
      ))}
      <button className="border-r border-[#808080] bg-[#f6f6f6] px-3 pb-0.5 font-bold">Model</button>
      <button className="bg-[#d2d2d2] px-2 pb-0.5">Motion Study 1</button>
    </div>
  );
}

const taskApps: { name: string; active?: boolean; icon: ReactNode }[] = [
  { name: "Chrome", icon: <Icon size="size-6"><circle cx="10" cy="10" r="9" fill="#f4c430" stroke="none" /><path d="M10 10L2.200 5.500A9 9 0 0 1 17.800 5.500z" fill="#dd4b39" stroke="none" /><path d="M10 10L2.200 5.500A9 9 0 0 0 9 19z" fill="#2f9e4f" stroke="none" /><circle cx="10" cy="10" r="4" fill="#4286f5" stroke="#fff" strokeWidth={1.5} /></Icon> },
  {
    name: "SOLIDWORKS 2020",
    active: true,
    icon: (
      <Icon size="size-6">
        <path d="M1 4l4-3h13l1 2v12l-4 4H2l-1-2z" fill="#a31a16" stroke="#5b0c0a" />
        <path d="M1 4l4-3h13l-3 3z" fill="#e0473c" stroke="none" />
        <text x="2" y="11" fontSize="9" fontWeight="bold" fill="#fff" stroke="none">SW</text>
        <text x="4" y="19" fontSize="6.500" fontWeight="bold" fill="#fff" stroke="none">2020</text>
      </Icon>
    ),
  },
  { name: "Inkscape", icon: <Icon size="size-6"><path d="M10 1l8 9q1 2-2 2.500 2 2-2 2.500l-4 3-4-3q-4-.500-2-2.500-3-.500-2-2.500z" fill="#0c0e10" stroke="#56626a" strokeWidth={0.6} /><path d="M10 2l4 5-3-1-1 2-1-2-3 1z" fill="#e8eef2" stroke="none" /></Icon> },
  { name: "File Explorer", icon: <Icon size="size-6"><path d="M1 3h7l1 2h10v12H1z" fill="#f8d36b" stroke="none" /><path d="M4 17v-5h12v5h-3.500v-2h-5v2z" fill="#4a90d9" stroke="none" /></Icon> },
  { name: "Photos", icon: <Icon size="size-6"><path d="M1 2.500h18v15H1z" fill="#3b8fe0" stroke="none" /><path d="M1 17.500L8 7l8 10.500z" fill="#123e75" stroke="none" /><path d="M10 13l3-3 6 7.500h-5z" fill="#1f5ca3" stroke="none" /><circle cx="15" cy="6" r="1.500" fill="#fff" stroke="none" /></Icon> },
  { name: "Recorder", active: true, icon: <Icon size="size-6"><path d="M1 2.500h17v14H1z" fill="#f3f3f3" stroke="#ccc" /><path d="M3 5h7v9H3z" fill="#2e7d6a" stroke="none" /><path d="M12 5h4M12 8h4" /><circle cx="15.500" cy="14.500" r="3.500" fill="#d93a44" stroke="#fff" /></Icon> },
];

function Taskbar() {
  return (
    <footer className="flex h-10 shrink-0 items-stretch bg-linear-to-r from-[#213039] via-[#262d2e] to-[#1e2932] text-white">
      <button aria-label="Start" className="flex w-12 items-center justify-center">
        <svg viewBox="0 0 16 16" className="size-4" fill="#fff"><path d="M0 2.200L6.500 1.300V7.500H0zM7.500 1.200L16 0v7.500H7.500zM0 8.500h6.500v6.200L0 13.800zM7.500 8.500H16V16l-8.500-1.200z" /></svg>
      </button>
      <label className="flex w-[344px] items-center gap-2 bg-[#f0f0f0] pt-px pl-3">
        <Icon><circle cx="12" cy="7.500" r="5.500" /><path d="M8 11.500L2 18" /></Icon>
        <input aria-label="Type here to search" placeholder="Type here to search" className="w-0 flex-1 text-sm outline-none placeholder:text-[#444]" />
      </label>
      <button aria-label="Cortana" className="flex w-12 items-center justify-center"><Icon><circle cx="10" cy="10" r="7" stroke="#fff" strokeWidth={2} /></Icon></button>
      <button aria-label="Task view" className="mr-[3px] flex w-12 items-center justify-center"><Icon><path d="M3 6.500h9v7H3zM3 2v2h9V2M3 18v-2h9v2M16 2v16M16 8v3" stroke="#fff" /></Icon></button>
      {taskApps.map((a) => (
        <button key={a.name} aria-label={a.name} className={clsx("mr-px flex w-12 flex-col items-center", a.active && "bg-white/20")}>
          <span className="flex flex-1 items-center pt-0.5">{a.icon}</span>
          <span className={clsx("h-0.5 bg-[#76b9ed]", a.active ? "w-full" : "w-10")} />
        </button>
      ))}
      <div className="ml-auto flex items-center">
        <div className="flex gap-1 pr-2.5">
          <Icon><path d="M4 13l6-6 6 6" stroke="#fff" strokeWidth={1.5} /></Icon>
          <Icon><path d="M6 6h12v8H6zM18 8.500h1.500v3" stroke="#fff" /><path d="M9 8h7v4H9z" fill="#fff" stroke="none" /><path d="M2 4v3h3V4M3.500 7v3H6" stroke="#fff" /></Icon>
          <Icon><path d="M4 17A13 13 0 0 1 17 4M8 17a9 9 0 0 1 9-9M12 17a5 5 0 0 1 5-5" stroke="#ccc" /><circle cx="16" cy="16" r="1.500" fill="#fff" stroke="none" /></Icon>
          <Icon><path d="M2 8h3l4-4v12l-4-4H2zM12 7l5 6M17 7l-5 6" stroke="#fff" /></Icon>
        </div>
        <time className="mr-4 w-[54px] text-center leading-[18px] whitespace-pre-line">{"4:01 PM\n5/17/2020"}</time>
        <button aria-label="Notifications" className="mr-3">
          <svg viewBox="0 0 26 26" className="size-[26px]" aria-hidden="true">
            <path d="M2 3h16v12H9l-4 4v-4H2z" fill="#fff" />
            <path d="M5 6.500h10M5 9h10M5 11.500h6" stroke="#263138" />
            <circle cx="17" cy="17" r="8" fill="#3b444a" stroke="#777" />
            <text x="14" y="21" fontSize="11" fill="#fff">2</text>
          </svg>
        </button>
        <span className="h-full w-1 border-l border-[#667]" />
      </div>
    </footer>
  );
}

const commandTabs = ["Features", "Sketch", "Markup", "Evaluate", "MBD Dimensions"];

export default function App() {
  const [tab, setTab] = useState("Sketch");
  return (
    <div className="relative flex h-screen flex-col overflow-hidden bg-white font-['Open_Sans','Noto_Sans',sans-serif] text-[11px] leading-4 text-black">
      <TitleBar />
      <Ribbon />
      <div className="flex min-h-0 flex-1">
        <div className="flex w-[262px] shrink-0 flex-col">
          <div role="tablist" className="z-10 flex h-[22px] w-[340px] shrink-0">
            {commandTabs.map((t) => (
              <button
                key={t}
                role="tab"
                aria-selected={tab === t}
                onClick={() => setTab(t)}
                className={clsx("shrink-0 border-r border-b border-[#8a8a8a] px-2 whitespace-nowrap", tab === t ? "border-b-transparent bg-[#f6f6f6] font-bold" : "bg-[#d2d2d2]")}
              >
                {t}
              </button>
            ))}
          </div>
          <div className="flex min-h-0 flex-1">
            <ToolRail />
            <FeatureTree />
          </div>
        </div>
        <Viewport />
      </div>
      <BottomTabs />
      <div className="flex h-[18px] shrink-0 items-center bg-[#f6f6f6] pr-1 pl-px">
        <span>Adds a reference plane.</span>
        <span className="mr-[120px] ml-auto">Editing Part</span>
        <button className="flex items-center gap-5">MMGS <Caret up /></button>
        <button aria-label="Tags" className="ml-[26px]"><Icon size="size-4"><path d="M1 6l8-4 9 7v5l-7 4L1 11zM1 6l10 7v5M11 13l7-4" fill="#fff" /><circle cx="7" cy="6.500" r="1.500" /></Icon></button>
      </div>
      <Taskbar />
      <InsertMenu />
    </div>
  );
}
